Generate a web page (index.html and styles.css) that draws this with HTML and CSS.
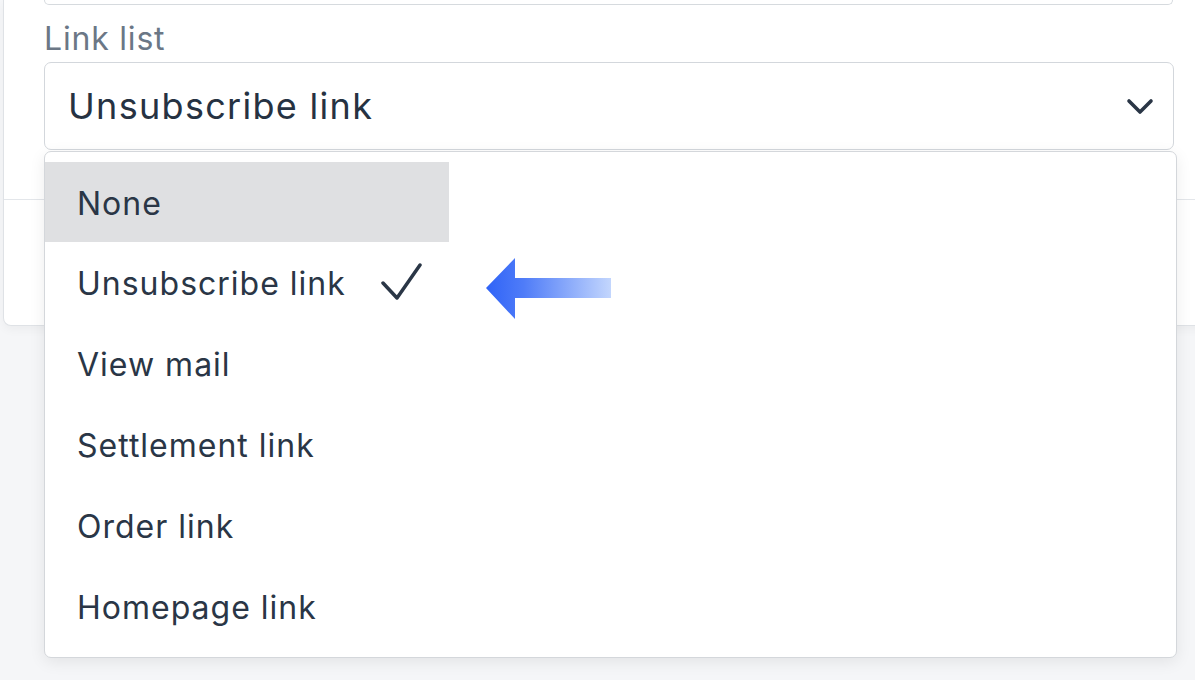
FILE: index.html
```html
<!DOCTYPE html>
<html lang="en">
<head>
<meta charset="utf-8">
<title>Link list</title>
<link rel="stylesheet" href="styles.css">
</head>
<body>
<div class="card">
  <div class="card-body">
    <div class="prev-field"></div>
    <label class="field-label">Link list</label>
    <div class="select-wrap">
      <div class="select">
        <span class="select-value">Unsubscribe link</span>
        <svg class="chevron" width="28" height="18" viewBox="0 0 28 18"><polyline points="3,3 14,14 25,3" fill="none" stroke="#2a3646" stroke-width="3.6" stroke-linecap="round" stroke-linejoin="round"/></svg>
      </div>
      <div class="menu">
        <ul class="menu-list">
          <li class="menu-item hover">None</li>
          <li class="menu-item selected">Unsubscribe link
            <svg class="check" width="44" height="42" viewBox="0 0 44 42"><polyline points="3,20 17,35 40,2" fill="none" stroke="#2a3646" stroke-width="3.5" stroke-linecap="round" stroke-linejoin="round"/></svg>
            <svg class="arrow" width="128" height="64" viewBox="0 0 128 64"><defs><linearGradient id="ag" x1="0" x2="1" y1="0" y2="0"><stop offset="0" stop-color="#2f63f7"/><stop offset="0.3" stop-color="#4f7cf8"/><stop offset="1" stop-color="#c3d6fd"/></linearGradient></defs><polygon points="1,31 30,1 30,21 126,21 126,41 30,41 30,62" fill="url(#ag)"/></svg>
          </li>
          <li class="menu-item">View mail</li>
          <li class="menu-item">Settlement link</li>
          <li class="menu-item">Order link</li>
          <li class="menu-item">Homepage link</li>
        </ul>
      </div>
    </div>
  </div>
  <div class="card-footer"></div>
</div>
</body>
</html>
```

FILE: styles.css
```css
html, body {
  margin: 0;
  padding: 0;
}
body {
  background: #f5f6f8;
  font-family: Inter, "Noto Sans", sans-serif;
  color: #2a3646;
  width: 1195px;
  height: 680px;
  overflow: hidden;
}
.card {
  margin-left: 3px;
  width: 1220px;
  background: #fff;
  border: 1px solid #dfe2e6;
  border-top: none;
  border-radius: 0 0 0 8px;
  box-shadow: 0 4px 10px rgba(0, 0, 0, 0.04);
}
.card-body {
  padding: 0 0 0 40px;
  height: 199px;
  box-sizing: border-box;
}
.prev-field {
  width: 1127px;
  height: 4px;
  border: 1px solid #d6dade;
  border-top: none;
  border-radius: 0 0 6px 6px;
}
.field-label {
  display: block;
  font-size: 32px;
  line-height: 40px;
  margin-top: 14px;
  color: #6b7786;
  letter-spacing: 0.8px;
}
.select-wrap {
  position: relative;
  width: 1130px;
  margin-top: 3px;
}
.select {
  height: 88px;
  box-sizing: border-box;
  border: 1px solid #d3d7dc;
  border-radius: 7px;
  display: flex;
  align-items: center;
  justify-content: space-between;
  padding: 0 19px 0 23px;
}
.select-value {
  font-size: 36px;
  letter-spacing: 1.3px;
  color: #263242;
}
.chevron {
  display: block;
  margin-top: 2px;
}
.menu {
  position: absolute;
  top: 89px;
  left: 0;
  width: 1133px;
  height: 507px;
  box-sizing: border-box;
  background: #fff;
  border: 1px solid #d4d7db;
  border-radius: 7px;
  box-shadow: 0 4px 16px rgba(0, 0, 0, 0.08);
  padding: 10px 0 0 0;
  z-index: 2;
}
.menu-list {
  list-style: none;
  margin: 0;
  padding: 0;
  width: 404px;
}
.menu-item {
  position: relative;
  height: 81px;
  box-sizing: border-box;
  padding-top: 2px;
  display: flex;
  align-items: center;
  padding-left: 32px;
  font-size: 32px;
  letter-spacing: 1px;
  color: #2a3646;
}
.menu-item.hover {
  background: #dfe0e2;
  height: 80px;
}
.check {
  margin-left: 34px;
  margin-top: 0;
}
.arrow {
  position: absolute;
  left: 440px;
  top: 15px;
}
.card-footer {
  border-top: 1px solid #e3e6ea;
  height: 125px;
}
```
